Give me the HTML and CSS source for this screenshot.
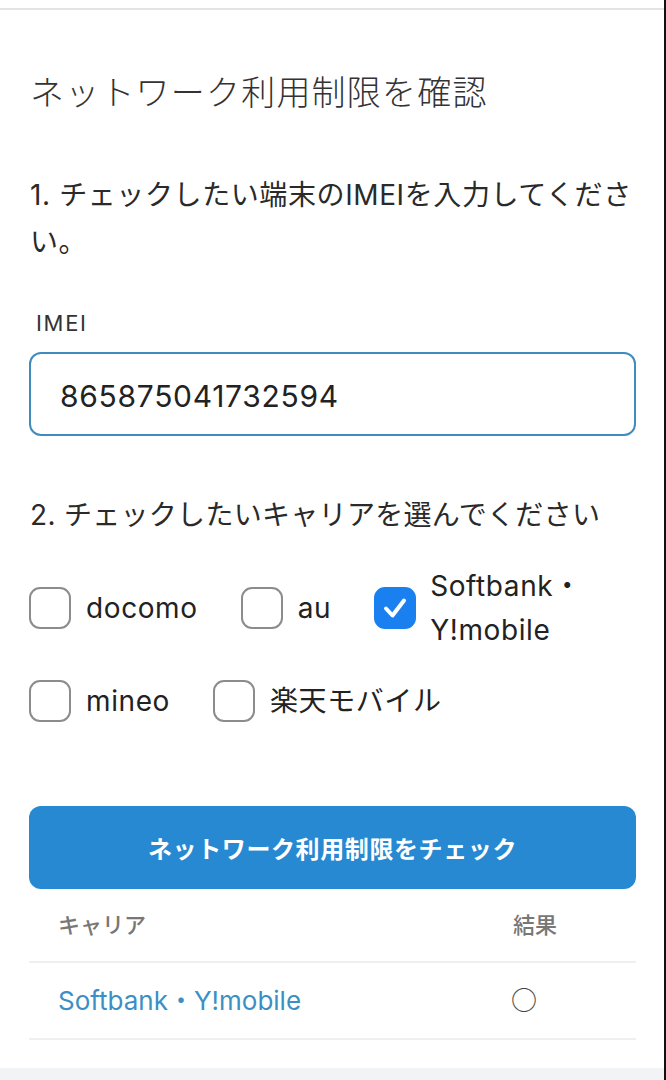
FILE: index.html
```html
<!DOCTYPE html>
<html lang="ja">
<head>
<meta charset="utf-8">
<title>ネットワーク利用制限を確認</title>
<link rel="stylesheet" href="styles.css">
</head>
<body>
<div class="page">
  <div class="topbar"></div>
  <main class="content">
    <h1 class="title">ネットワーク利用制限を確認</h1>
    <p class="step step-1">1. チェックしたい端末のIMEIを入力してください。</p>
    <label class="field-label" for="imei">IMEI</label>
    <div class="input">865875041732594</div>
    <p class="step step-2">2. チェックしたいキャリアを選んでください</p>
    <div class="carriers">
      <div class="carrier-row">
        <div class="carrier"><span class="box"></span><span class="name">docomo</span></div>
        <div class="carrier"><span class="box"></span><span class="name">au</span></div>
        <div class="carrier carrier-wrap"><span class="box checked"><svg viewBox="0 0 42 42" width="42" height="42"><path d="M12 21.5 L18.5 28.5 L30 13.5" fill="none" stroke="#fff" stroke-width="4" stroke-linecap="round" stroke-linejoin="round"/></svg></span><span class="name">Softbank・Y!mobile</span></div>
      </div>
      <div class="carrier-row">
        <div class="carrier"><span class="box"></span><span class="name">mineo</span></div>
        <div class="carrier"><span class="box"></span><span class="name">楽天モバイル</span></div>
      </div>
    </div>
    <button class="check-btn">ネットワーク利用制限をチェック</button>
    <div class="table">
      <div class="trow thead"><span class="c1">キャリア</span><span class="c2">結果</span></div>
      <div class="trow tbody"><span class="c1 link">Softbank・Y!mobile</span><span class="c2 mark">○</span></div>
    </div>
  </main>
  <div class="footer"></div>
</div>
</body>
</html>
```

FILE: styles.css
```css
* { box-sizing: border-box; }
html, body { margin: 0; padding: 0; background: #fff; }
body {
  font-family: Inter, "Noto Sans CJK JP", sans-serif;
  color: #222;
}
.page {
  width: 666px;
  height: 1080px;
  border-right: 2px solid #111;
  display: flex;
  flex-direction: column;
  overflow: hidden;
}
.topbar {
  height: 10px;
  border-bottom: 2px solid #e3e3e3;
  flex: none;
}
.content {
  flex: 1;
  display: flex;
  flex-direction: column;
  padding: 0 28px 0 29px;
}
.title {
  margin: 59px 0 0 1px;
  font-size: 34px;
  line-height: 48px;
  font-weight: 300;
  letter-spacing: 1.2px;
  color: #333;
}
.step {
  margin: 55px 0 0 1px;
  font-size: 28px;
  line-height: 47px;
  font-weight: 400;
  letter-spacing: 0.3px;
  color: #2a2a2a;
}
.step-1 { letter-spacing: 0.6px; }
.step-2 { margin-top: 56px; }
.field-label {
  margin: 42px 0 0 7px;
  font-size: 22px;
  line-height: 30px;
  letter-spacing: 1.7px;
  color: #333;
}
.input {
  margin-top: 14px;
  height: 84px;
  border: 2px solid #3f8dbf;
  border-radius: 12px;
  padding: 3px 0 0 29px;
  display: flex;
  align-items: center;
  font-size: 30px;
  letter-spacing: 0.7px;
  color: #222;
}
.carriers {
  margin-top: 25px;
  display: flex;
  flex-direction: column;
  gap: 27px;
}
.carrier-row {
  display: flex;
  align-items: center;
  column-gap: 43px;
}
.carrier {
  display: flex;
  align-items: center;
  gap: 15px;
  flex: none;
}
.carrier-wrap { flex: 1 1 0; min-width: 0; gap: 14px; }
.name {
  font-size: 28px;
  line-height: 44px;
  letter-spacing: 0.6px;
  color: #222;
}
.box {
  width: 42px;
  height: 42px;
  border: 2.5px solid #8c8c8c;
  border-radius: 11px;
  flex: none;
  display: flex;
}
.box.checked {
  background: #1a80ef;
  border-color: #1a80ef;
  align-items: center;
  justify-content: center;
}
.box.checked svg { flex: none; }
.check-btn {
  margin-top: 83px;
  height: 83px;
  border: none;
  border-radius: 12px;
  background: #2689d1;
  color: #fff;
  font-family: Inter, "Noto Sans CJK JP", sans-serif;
  font-size: 24px;
  font-weight: 700;
  letter-spacing: 0.6px;
}
.table { display: flex; flex-direction: column; }
.trow {
  display: flex;
  align-items: center;
  border-bottom: 2px solid #efefef;
}
.thead { height: 74px; padding-bottom: 4px; }
.tbody { height: 77px; padding-bottom: 4px; }
.c1 { width: 484px; padding-left: 29px; flex: none; }
.c2 { flex: 1; }
.thead span {
  font-size: 22px;
  font-weight: 500;
  color: #777;
}
.link {
  font-size: 26px;
  color: #3b8fc4;
}
.mark {
  font-family: "Noto Sans CJK JP", sans-serif;
  font-size: 26px;
  color: #444;
  margin-left: -2px;
}
.footer {
  flex: none;
  height: 12px;
  background: #f1f3f4;
}
```
